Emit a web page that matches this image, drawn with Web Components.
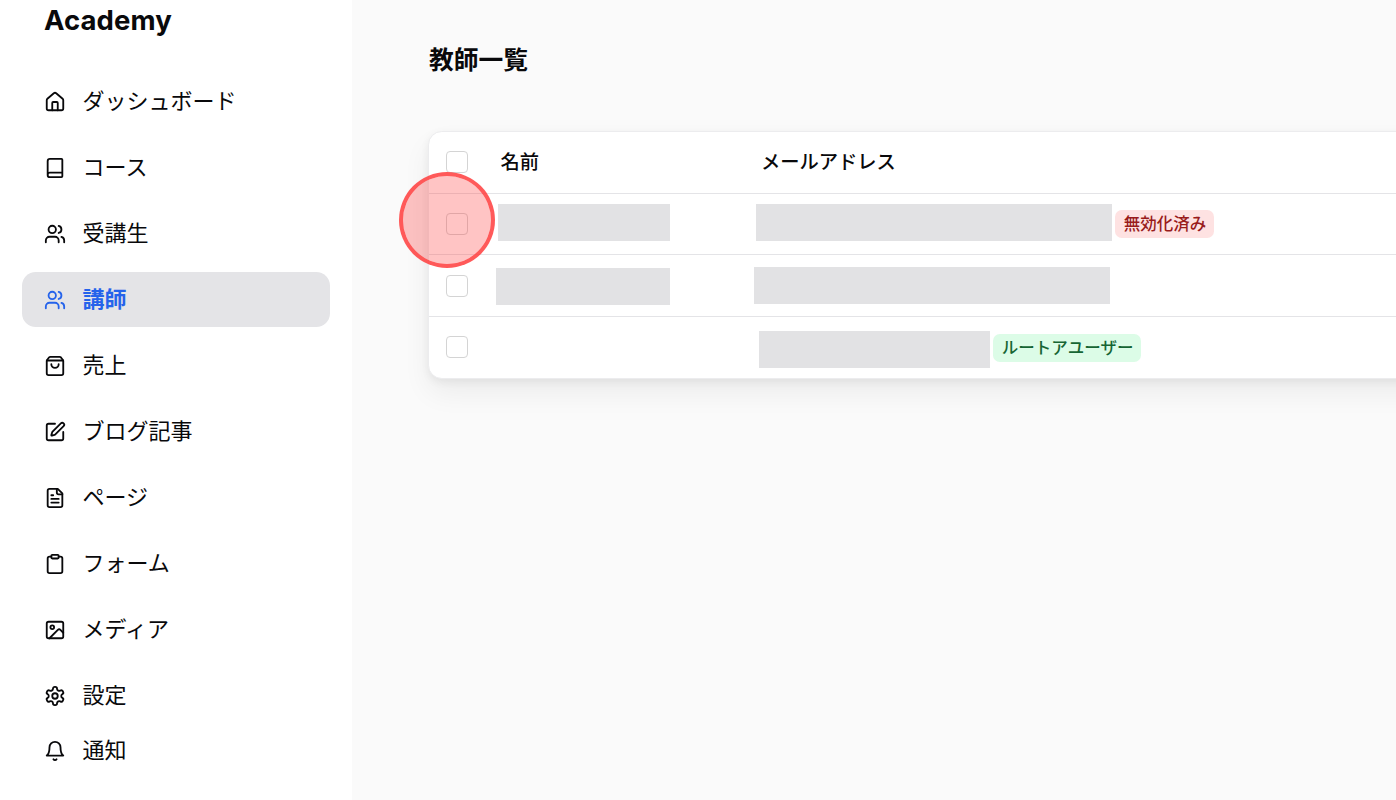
<!DOCTYPE html>
<html lang="ja"><head><meta charset="utf-8"><title>教師一覧</title>
<style>
html,body{margin:0;padding:0;height:800px;overflow:hidden;background:#fafafa}
body{font-family:Inter,"Noto Sans CJK JP",sans-serif;color:#09090b}
</style></head><body>
<x-app>
  <x-sidebar slot="side" brand="Academy">
    <x-nav-item icon="home">ダッシュボード</x-nav-item>
    <x-nav-item icon="book">コース</x-nav-item>
    <x-nav-item icon="users">受講生</x-nav-item>
    <x-nav-item icon="users" active>講師</x-nav-item>
    <x-nav-item icon="bag">売上</x-nav-item>
    <x-nav-item icon="pen">ブログ記事</x-nav-item>
    <x-nav-item icon="file">ページ</x-nav-item>
    <x-nav-item icon="clip">フォーム</x-nav-item>
    <x-nav-item icon="image">メディア</x-nav-item>
    <x-nav-item icon="gear">設定</x-nav-item>
    <x-nav-item icon="bell" slot="bottom">通知</x-nav-item>
  </x-sidebar>
  <x-main heading="教師一覧">
    <x-card>
      <x-row header>
        <x-check></x-check>
        <span slot="name">名前</span>
        <span slot="email">メールアドレス</span>
      </x-row>
      <x-row>
        <x-check></x-check>
        <x-redact slot="name" style="--w:172px;--ml:-2.5px;--mt:10px"></x-redact>
        <x-redact slot="email" style="--w:356px;--ml:-5px;--mt:10px"></x-redact>
        <x-badge slot="email" tone="red" style="--ml:3px;--mt:16px">無効化済み</x-badge>
      </x-row>
      <x-row>
        <x-check></x-check>
        <x-redact slot="name" style="--w:174px;--ml:-4.5px;--mt:13px"></x-redact>
        <x-redact slot="email" style="--w:356px;--ml:-7px;--mt:12px"></x-redact>
      </x-row>
      <x-row>
        <x-check></x-check>
        <x-redact slot="email" style="--w:231px;--ml:-2px;--mt:14px"></x-redact>
        <x-badge slot="email" tone="green" style="--ml:3px;--mt:17px">ルートアユーザー</x-badge>
      </x-row>
    </x-card>
  </x-main>
  <x-marker></x-marker>
</x-app>
<script>
const ICONS={
home:'<path d="M15 21v-8a1 1 0 0 0-1-1h-4a1 1 0 0 0-1 1v8"/><path d="M3 10a2 2 0 0 1 .709-1.528l7-5.999a2 2 0 0 1 2.582 0l7 5.999A2 2 0 0 1 21 10v9a2 2 0 0 1-2 2H5a2 2 0 0 1-2-2z"/>',
book:'<path d="M4 19.5v-15A2.5 2.5 0 0 1 6.5 2H19a1 1 0 0 1 1 1v18a1 1 0 0 1-1 1H6.5a1 1 0 0 1 0-5H20"/>',
users:'<path d="M16 21v-2a4 4 0 0 0-4-4H6a4 4 0 0 0-4 4v2"/><circle cx="9" cy="7" r="4"/><path d="M22 21v-2a4 4 0 0 0-3-3.87"/><path d="M16 3.13a4 4 0 0 1 0 7.75"/>',
bag:'<path d="M16 10a4 4 0 0 1-8 0"/><path d="M3.103 6.034h17.794"/><path d="M3.4 5.467a2 2 0 0 0-.4 1.2V20a2 2 0 0 0 2 2h14a2 2 0 0 0 2-2V6.667a2 2 0 0 0-.4-1.2l-2.1-2.8A2 2 0 0 0 17 2H7a2 2 0 0 0-1.6.8z"/>',
pen:'<path d="M12 3H5a2 2 0 0 0-2 2v14a2 2 0 0 0 2 2h14a2 2 0 0 0 2-2v-7"/><path d="M18.375 2.625a1 1 0 0 1 3 3l-9.013 9.014a2 2 0 0 1-.853.505l-2.873.84a.5.5 0 0 1-.62-.62l.84-2.873a2 2 0 0 1 .506-.852z"/>',
file:'<path d="M15 2H6a2 2 0 0 0-2 2v16a2 2 0 0 0 2 2h12a2 2 0 0 0 2-2V7Z"/><path d="M14 2v4a2 2 0 0 0 2 2h4"/><path d="M10 9H8"/><path d="M16 13H8"/><path d="M16 17H8"/>',
clip:'<rect width="8" height="4" x="8" y="2" rx="1" ry="1"/><path d="M16 4h2a2 2 0 0 1 2 2v14a2 2 0 0 1-2 2H6a2 2 0 0 1-2-2V6a2 2 0 0 1 2-2h2"/>',
image:'<rect width="18" height="18" x="3" y="3" rx="2" ry="2"/><circle cx="9" cy="9" r="2"/><path d="m21 15-3.086-3.086a2 2 0 0 0-2.828 0L6 21"/>',
gear:'<path d="M12.22 2h-.44a2 2 0 0 0-2 2v.18a2 2 0 0 1-1 1.73l-.43.25a2 2 0 0 1-2 0l-.15-.08a2 2 0 0 0-2.73.73l-.22.38a2 2 0 0 0 .73 2.73l.15.1a2 2 0 0 1 1 1.72v.51a2 2 0 0 1-1 1.74l-.15.09a2 2 0 0 0-.73 2.73l.22.38a2 2 0 0 0 2.73.73l.15-.08a2 2 0 0 1 2 0l.43.25a2 2 0 0 1 1 1.73V20a2 2 0 0 0 2 2h.44a2 2 0 0 0 2-2v-.18a2 2 0 0 1 1-1.73l.43-.25a2 2 0 0 1 2 0l.15.08a2 2 0 0 0 2.73-.73l.22-.39a2 2 0 0 0-.73-2.73l-.15-.08a2 2 0 0 1-1-1.74v-.5a2 2 0 0 1 1-1.74l.15-.09a2 2 0 0 0 .73-2.73l-.22-.38a2 2 0 0 0-2.73-.73l-.15.08a2 2 0 0 1-2 0l-.43-.25a2 2 0 0 1-1-1.73V4a2 2 0 0 0-2-2z"/><circle cx="12" cy="12" r="3"/>',
bell:'<path d="M6 8a6 6 0 0 1 12 0c0 7 3 9 3 9H3s3-2 3-9"/><path d="M10.3 21a1.94 1.94 0 0 0 3.4 0"/>'
};
function def(name,html,extra){
  customElements.define(name,class extends HTMLElement{
    constructor(){super();this.attachShadow({mode:'open'}).innerHTML=typeof html==='function'?html(this):html;}
    connectedCallback(){extra&&extra(this)}
  });
}
def('x-app',`<style>:host{display:flex;position:relative;width:1396px;height:800px;overflow:hidden}</style><slot name="side"></slot><slot></slot>`);
def('x-sidebar',`<style>
:host{display:flex;flex-direction:column;flex:none;width:352px;height:800px;box-sizing:border-box;background:#fff;overflow:hidden;padding:0 22px}
.brand{font-size:27.5px;font-weight:700;line-height:41px;height:41px;padding-left:22px;letter-spacing:.1px}
nav{display:flex;flex-direction:column;gap:11px;margin-top:33px}
.bottom{margin-top:0}
</style><div class="brand"></div><nav><slot></slot></nav><div class="bottom"><slot name="bottom"></slot></div>`,
el=>{el.shadowRoot.querySelector('.brand').textContent=el.getAttribute('brand')});
def('x-nav-item',el=>`<style>
:host{display:flex;align-items:center;gap:16.5px;height:55px;padding:0 22px;border-radius:13.75px;font-size:22px;font-weight:400;color:#09090b}
:host([active]){background:#e4e4e7;color:#2563eb;font-weight:600}
svg{width:22px;height:22px;flex:none;fill:none;stroke:currentColor;stroke-width:2;stroke-linecap:round;stroke-linejoin:round}
span{margin-bottom:6px}
</style><svg viewBox="0 0 24 24">${ICONS[el.getAttribute('icon')]||''}</svg><span><slot></slot></span>`);
def('x-main',`<style>
:host{display:block;flex:1;min-width:0;padding:39px 0 0 77px;overflow:visible}
h1{margin:0 0 49px;font-size:24.75px;font-weight:600;line-height:43px;height:43px}
</style><h1></h1><slot></slot>`,el=>{el.shadowRoot.querySelector('h1').textContent=el.getAttribute('heading')});
def('x-card',`<style>
:host{display:block;width:1200px;margin-left:-1px;background:#fff;border:1px solid #ececee;border-radius:13.75px;box-shadow:0 14px 28px rgba(0,0,0,.06),0 3px 8px rgba(0,0,0,.06)}
</style><slot></slot>`);
def('x-row',`<style>
:host{display:grid;grid-template-columns:54.5px 260.5px 1fr;height:61.45px;box-sizing:border-box;padding-left:17px;border-top:1px solid #e4e4e7;font-size:19.25px;font-weight:500}
:host([header]){border-top:0;height:61px}
:host(:last-child){height:62px}
.c{display:flex;align-items:center}
.r{display:flex;align-items:flex-start}
:host([header]) .r{align-items:center;padding-bottom:4px}
:host([header]) .c{padding-bottom:2px}
</style><div class="c"><slot></slot></div><div class="r"><slot name="name"></slot></div><div class="r"><slot name="email"></slot></div>`);
def('x-check',`<style>:host{display:block;width:22px;height:22px;box-sizing:border-box;border:1px solid #d4d4d4;border-radius:4px;background:#fff}</style>`);
def('x-redact',`<style>:host{display:block;flex:none;width:var(--w);height:37px;margin-left:var(--ml,0);margin-top:var(--mt,0);background:#e2e2e4}</style>`);
def('x-badge',`<style>
:host{display:block;flex:none;box-sizing:border-box;height:28px;line-height:28px;padding:0 7.75px 0 8.75px;border-radius:6.875px;font-size:16.5px;font-weight:500;margin-left:var(--ml,0);margin-top:var(--mt,0)}
:host([tone=red]){background:#fee2e2;color:#991b1b}
:host([tone=green]){background:#dcfce7;color:#166534}
</style><slot></slot>`);
def('x-marker',`<style>:host{position:absolute;left:399px;top:172px;width:96px;height:96px;box-sizing:border-box;border-radius:50%;border:4px solid rgba(255,60,60,.85);background:rgba(255,60,60,.3);background-clip:padding-box}</style>`);
</script>
</body></html>
